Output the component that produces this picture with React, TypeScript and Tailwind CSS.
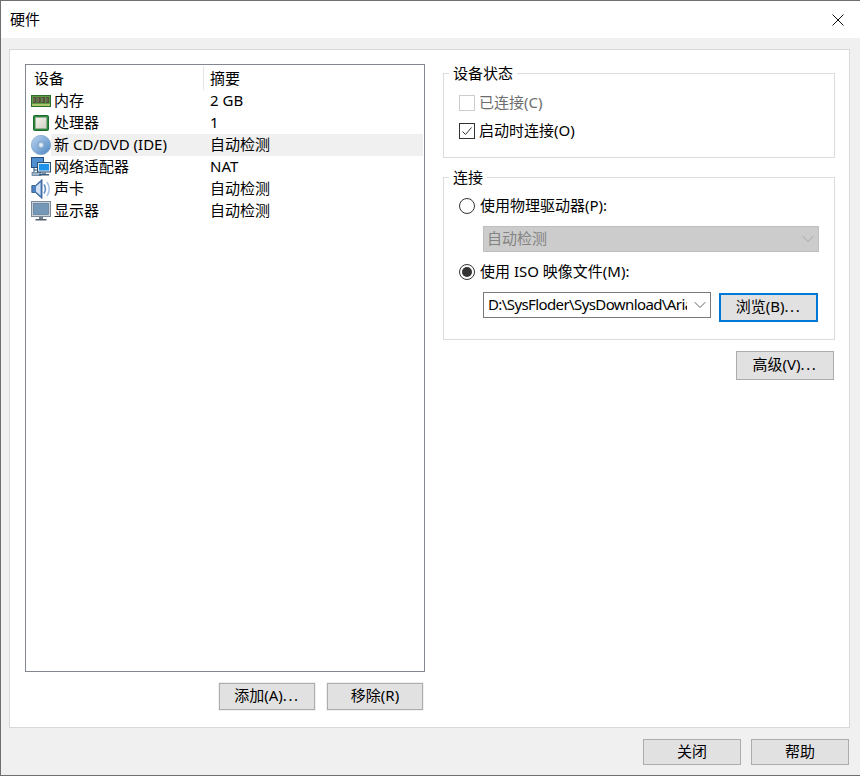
import { ChevronDown } from 'lucide-react';

const font = { fontFamily: '"Noto Sans", "Noto Sans CJK SC", sans-serif' };

function MemoryIcon() {
    return (
        <svg width="20" height="20" viewBox="0 0 20 20">
            <rect x="0.5" y="4.5" width="19" height="11" fill="#5c9c46" stroke="#2f6d2a" />
            <rect x="2" y="6" width="3.5" height="6" fill="#55503c" />
            <rect x="6.3" y="6" width="3.5" height="6" fill="#55503c" />
            <rect x="10.6" y="6" width="3.5" height="6" fill="#55503c" />
            <rect x="14.9" y="6" width="3.2" height="6" fill="#55503c" />
            <path d="M3 7v4M7.3 7v4M11.6 7v4M15.9 7v4" stroke="#8d8a70" strokeWidth="0.8" />
            <rect x="1" y="13" width="18" height="2" fill="#a9c86c" />
        </svg>
    );
}

function CpuIcon() {
    return (
        <svg width="20" height="20" viewBox="0 0 20 20">
            <rect x="2.5" y="2.5" width="15" height="15" rx="1" fill="#2b8a3e" stroke="#1c6a2c" />
            <defs>
                <linearGradient id="cpu" x1="0" y1="0" x2="1" y2="1">
                    <stop offset="0" stopColor="#f7f6ee" />
                    <stop offset="1" stopColor="#cfcfc4" />
                </linearGradient>
            </defs>
            <rect x="4.5" y="4.5" width="11" height="11" fill="url(#cpu)" stroke="#a6a99b" strokeWidth="0.6" />
        </svg>
    );
}

function DiscIcon() {
    return (
        <svg width="20" height="20" viewBox="0 0 20 20">
            <defs>
                <linearGradient id="disc" x1="0" y1="0" x2="1" y2="1">
                    <stop offset="0" stopColor="#bcd4ee" />
                    <stop offset="0.45" stopColor="#8ab2dc" />
                    <stop offset="1" stopColor="#4f86c0" />
                </linearGradient>
            </defs>
            <circle cx="10" cy="10" r="9.7" fill="url(#disc)" stroke="#7099c4" strokeWidth="0.6" />
            <circle cx="10" cy="10" r="3.2" fill="#c4d9ee" stroke="#6690bb" strokeWidth="0.8" />
            <circle cx="10" cy="10" r="1" fill="#f4f8fc" />
        </svg>
    );
}

function NetworkIcon() {
    return (
        <svg width="20" height="20" viewBox="0 0 20 20">
            <rect x="0.5" y="0.5" width="12" height="10" fill="#4f8fcf" stroke="#28507a" />
            <path d="M3 11v4M3 13h4" stroke="#28507a" fill="none" />
            <rect x="1" y="15.5" width="9" height="3" fill="#9db4c9" stroke="#3f5f7f" strokeWidth="0.6" />
            <rect x="6.5" y="5.5" width="13" height="9.5" fill="#dfe8f0" stroke="#2c4f70" />
            <rect x="8" y="7" width="10" height="6.5" fill="#1f93ea" />
            <rect x="11" y="15" width="4" height="2" fill="#7890a6" />
            <rect x="8" y="17" width="10" height="1.5" fill="#3f5f7f" />
        </svg>
    );
}

function SpeakerIcon() {
    return (
        <svg width="20" height="20" viewBox="0 0 20 20">
            <path d="M0.8 6.5h3.7L11 0.5v19l-6.5-6H0.8z" fill="#4e82c2" stroke="#2c5488" strokeWidth="0.8" />
            <path d="M5 7.5l4.5-4v13l-4.5-4z" fill="#d3e3f4" />
            <path d="M13 5.5c1.8 2.8 1.8 6.2 0 9" stroke="#5f8fc6" strokeWidth="1.6" fill="none" />
            <path d="M16 3c2.8 4.4 2.8 9.6 0 14" stroke="#a9c4e2" strokeWidth="1.6" fill="none" />
        </svg>
    );
}

function MonitorIcon() {
    return (
        <svg width="20" height="20" viewBox="0 0 20 20">
            <rect x="0.5" y="0.5" width="19" height="15" fill="#c9d3dc" stroke="#7c8b99" />
            <rect x="2.5" y="2.5" width="15" height="11" fill="#7597b8" stroke="#56708a" strokeWidth="0.6" />
            <rect x="8" y="16" width="4" height="2" fill="#6f7f8e" />
            <rect x="4.5" y="18" width="11" height="1.5" fill="#53616e" />
        </svg>
    );
}

const rows = [
    { name: '内存', value: '2 GB', icon: <MemoryIcon /> },
    { name: '处理器', value: '1', icon: <CpuIcon /> },
    { name: '新 CD/DVD (IDE)', value: '自动检测', icon: <DiscIcon />, selected: true },
    { name: '网络适配器', value: 'NAT', icon: <NetworkIcon /> },
    { name: '声卡', value: '自动检测', icon: <SpeakerIcon /> },
    { name: '显示器', value: '自动检测', icon: <MonitorIcon /> },
];

function Btn({ label, dots, className = '' }: { label: string; dots?: boolean; className?: string }) {
    return (
        <button
            className={`w-[96px] border border-[#adadad] bg-[#e1e1e1] text-[15px] text-black flex items-center justify-center pb-[2px] ${className}`}
        >
            {label}
            {dots && <span className="tracking-[1.6px]">...</span>}
        </button>
    );
}

function Radio({ checked }: { checked?: boolean }) {
    return (
        <span className="w-4 h-4 rounded-full border border-[#333] bg-white flex items-center justify-center shrink-0">
            {checked && <span className="w-[10px] h-[10px] rounded-full bg-[#333]" />}
        </span>
    );
}

export default function App() {
    return (
        <div
            style={font}
            className="w-[860px] h-[776px] bg-[#f0f0f0] border-l border-t border-b border-[#6f6f6f] flex flex-col text-[15px] text-black overflow-hidden"
        >
            {/* Title bar */}
            <div className="h-[37px] shrink-0 bg-white flex items-center justify-between pl-[9px] pr-[16px]">
                <span className="leading-none">硬件</span>
                <svg width="12" height="12" viewBox="0 0 12 12">
                    <path d="M0.5 0.5l11 11M11.5 0.5l-11 11" stroke="#111" strokeWidth="1" fill="none" />
                </svg>
            </div>

            {/* Panel */}
            <div className="mt-[11px] ml-2 w-[841px] h-[679px] shrink-0 bg-white border border-[#d9d9d9] flex pt-[14px] pl-[15px]">
                {/* Left column */}
                <div className="w-[400px] shrink-0 flex flex-col">
                    <div className="h-[608px] border border-[#828790] flex flex-col">
                        <div className="h-[25px] shrink-0 flex items-stretch">
                            <div className="w-[178px] pl-2 flex items-center border-r border-[#e5e5e5] mt-px">设备</div>
                            <div className="pl-[6px] flex items-center mt-px">摘要</div>
                        </div>
                        {rows.map((row) => (
                            <div key={row.name} className="h-[22px] flex items-center pl-[5px] pr-px">
                                <span className="w-5 h-5 shrink-0">{row.icon}</span>
                                <div
                                    className={`flex-1 h-full flex items-center pl-[3px] pb-[2px] ${row.selected ? 'bg-[#f0f0f0]' : ''}`}
                                >
                                    <span className="w-[156px] whitespace-pre">{row.name}</span>
                                    <span>{row.value}</span>
                                </div>
                            </div>
                        ))}
                    </div>
                    <div className="mt-[11px] pr-[2px] flex justify-end gap-3">
                        <Btn label="添加(A)" dots className="h-[27px] outline outline-1 outline-[#f0f0f0]" />
                        <Btn label="移除(R)" className="h-[27px] outline outline-1 outline-[#f0f0f0]" />
                    </div>
                </div>

                {/* Right column */}
                <div className="w-[392px] ml-[18px] shrink-0 pt-[9px] flex flex-col">
                    <div className="relative h-[85px] border border-[#dcdcdc] pl-[15px] pt-[21px]">
                        <span className="absolute left-[5px] -top-[11px] bg-white px-1 leading-[20px]">设备状态</span>
                        <div className="flex items-center gap-1 h-[16px] text-[#6d6d6d]">
                            <span className="w-4 h-4 border border-[#cccccc] bg-white shrink-0" />
                            <span className="pb-[2px]">已连接(C)</span>
                        </div>
                        <div className="flex items-center gap-1 h-[16px] mt-[12px]">
                            <span className="w-4 h-4 border border-[#333] bg-white shrink-0 flex items-center justify-center">
                                <svg width="12" height="12" viewBox="0 0 12 12">
                                    <path d="M1.5 6.5l3 3 6-7" stroke="#333" strokeWidth="1" fill="none" />
                                </svg>
                            </span>
                            <span className="pb-[2px]">启动时连接(O)</span>
                        </div>
                    </div>

                    <div className="relative h-[163px] mt-[19px] border border-[#dcdcdc] pl-[15px] pt-[20px]">
                        <span className="absolute left-[5px] -top-[11px] bg-white px-1 leading-[20px]">连接</span>
                        <div className="flex items-center gap-[5px] h-[16px]">
                            <Radio />
                            <span className="pb-[2px]">使用物理驱动器(P):</span>
                        </div>
                        <div className="mt-[12px] ml-[24px] w-[336px] h-[26px] bg-[#cccccc] border border-[#bfbfbf] flex items-center justify-between pl-[3px] text-[#838383]">
                            <span className="pb-[2px]">自动检测</span>
                            <ChevronDown size={20} strokeWidth={1} color="#a0a0a0" />
                        </div>
                        <div className="mt-[12px] flex items-center gap-[5px] h-[16px]">
                            <Radio checked />
                            <span className="whitespace-pre pb-[2px]">使用 ISO 映像文件(M):</span>
                        </div>
                        <div className="mt-[12px] ml-[24px] flex items-start gap-2">
                            <div className="w-[228px] h-[26px] bg-white border border-[#7a7a7a] flex items-center pl-1">
                                <span className="w-[199px] overflow-hidden whitespace-nowrap tracking-[-0.6px] pb-[2px]">D:\SysFloder\SysDownload\Aria</span>
                                <ChevronDown size={20} strokeWidth={1} color="#444" className="ml-auto shrink-0" />
                            </div>
                            <button className="w-[99px] h-[29px] mt-px border-2 border-[#0078d7] bg-[#e1e1e1] text-[15px] flex items-center justify-center pb-[2px]">
                                浏览(B)<span className="tracking-[1.6px]">...</span>
                            </button>
                        </div>
                    </div>

                    <div className="mt-[11px] pr-px flex justify-end">
                        <Btn label="高级(V)" dots className="h-[29px] w-[98px]" />
                    </div>
                </div>
            </div>

            {/* Footer */}
            <div className="mt-[11px] pr-[11px] flex justify-end gap-[10px]">
                <Btn label="关闭" className="h-[26px] w-[98px]" />
                <Btn label="帮助" className="h-[26px] w-[98px]" />
            </div>
        </div>
    );
}
